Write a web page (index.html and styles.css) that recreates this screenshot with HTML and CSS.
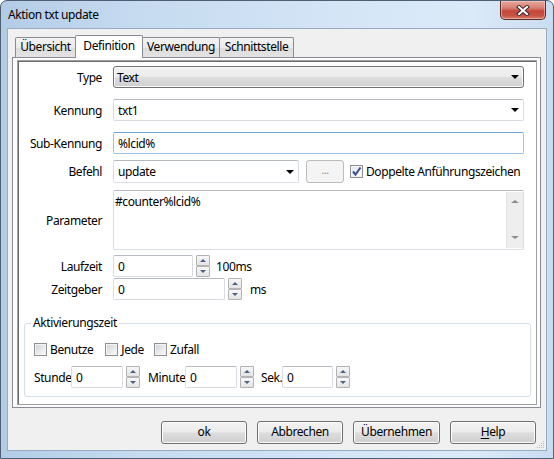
FILE: index.html
```html
<!DOCTYPE html>
<html lang="de">
<head>
<meta charset="utf-8">
<title>Aktion txt update</title>
<link rel="stylesheet" href="styles.css">
</head>
<body>
<div class="window">
  <div class="titlebar">
    <span class="title">Aktion txt update</span>
    <div class="close">
      <svg width="14" height="11" viewBox="0 0 14 11">
        <path d="M3 2 L11 9 M11 2 L3 9" stroke="#3a2a2a" stroke-width="4" stroke-linecap="square"/>
        <path d="M3 2 L11 9 M11 2 L3 9" stroke="#ffffff" stroke-width="2" stroke-linecap="square"/>
      </svg>
    </div>
  </div>
  <div class="client">
    <div class="tabs">
      <div class="tab t1">Übersicht</div>
      <div class="tab t2 active">Definition</div>
      <div class="tab t3">Verwendung</div>
      <div class="tab t4">Schnittstelle</div>
    </div>
    <div class="tabpage">
      <div class="panel">
        <div class="row r-type">
          <div class="lbl">Type</div>
          <div class="select w-full"><span>Text</span><i class="arrow"></i></div>
        </div>
        <div class="row r-kennung">
          <div class="lbl">Kennung</div>
          <div class="combo w-full"><span>txt1</span><i class="arrow"></i></div>
        </div>
        <div class="row r-sub">
          <div class="lbl">Sub-Kennung</div>
          <div class="input focused w-full"><span>%lcid%</span></div>
        </div>
        <div class="row r-befehl">
          <div class="lbl">Befehl</div>
          <div class="combo w-befehl"><span>update</span><i class="arrow"></i></div>
          <div class="dots">...</div>
          <div class="check checked">
            <svg width="11" height="11" viewBox="0 0 11 11"><path d="M2 5.5 L4.5 8.5 L9.5 1.5" fill="none" stroke="#3b4f91" stroke-width="2"/></svg>
          </div>
          <span class="check-lbl">Doppelte Anführungszeichen</span>
        </div>
        <div class="row r-param">
          <div class="lbl">Parameter</div>
          <div class="textarea w-full">
            <span class="ta-text">#counter%lcid%</span>
            <div class="vscroll"><i class="sa up"></i><i class="sa down"></i></div>
          </div>
        </div>
        <div class="row r-lauf">
          <div class="lbl">Laufzeit</div>
          <div class="input w-lauf"><span>0</span></div>
          <div class="spin"><div class="sb"><i class="up"></i></div><div class="sb"><i class="down"></i></div></div>
          <span class="unit u1">100ms</span>
        </div>
        <div class="row r-zeit">
          <div class="lbl">Zeitgeber</div>
          <div class="input w-zeit"><span>0</span></div>
          <div class="spin"><div class="sb"><i class="up"></i></div><div class="sb"><i class="down"></i></div></div>
          <span class="unit u2">ms</span>
        </div>
        <fieldset class="group">
          <legend>Aktivierungszeit</legend>
          <div class="checks">
            <div class="check c1"></div><span class="cl">Benutze</span>
            <div class="check c2"></div><span class="cl">Jede</span>
            <div class="check c3"></div><span class="cl">Zufall</span>
          </div>
          <div class="times">
            <span class="tl tl-std">Stunde</span>
            <div class="input w-t"><span>0</span></div>
            <div class="spin"><div class="sb"><i class="up"></i></div><div class="sb"><i class="down"></i></div></div>
            <span class="tl tl-min">Minute</span>
            <div class="input w-t"><span>0</span></div>
            <div class="spin"><div class="sb"><i class="up"></i></div><div class="sb"><i class="down"></i></div></div>
            <span class="tl tl-sek">Sek.</span>
            <div class="input w-t2"><span>0</span></div>
            <div class="spin sp3"><div class="sb"><i class="up"></i></div><div class="sb"><i class="down"></i></div></div>
          </div>
        </fieldset>
      </div>
    </div>
    <div class="buttons">
      <div class="btn b1">ok</div>
      <div class="btn b2">Abbrechen</div>
      <div class="btn b3">Übernehmen</div>
      <div class="btn b4"><u>H</u>elp</div>
    </div>
    <svg class="grip" width="8" height="8" viewBox="0 0 8 8">
      <rect x="6" y="0" width="1" height="1" fill="#b9b9b9"/>
      <rect x="4" y="2" width="1" height="1" fill="#b9b9b9"/><rect x="6" y="2" width="1" height="1" fill="#b9b9b9"/>
      <rect x="2" y="4" width="1" height="1" fill="#b9b9b9"/><rect x="4" y="4" width="1" height="1" fill="#b9b9b9"/><rect x="6" y="4" width="1" height="1" fill="#b9b9b9"/>
      <rect x="0" y="6" width="1" height="1" fill="#b9b9b9"/><rect x="2" y="6" width="1" height="1" fill="#b9b9b9"/><rect x="4" y="6" width="1" height="1" fill="#b9b9b9"/><rect x="6" y="6" width="1" height="1" fill="#b9b9b9"/>
    </svg>
  </div>
</div>
</body>
</html>
```
FILE: styles.css
```css
* { box-sizing: border-box; }
html, body { margin: 0; padding: 0; background: #ffffff; }
body {
  font-family: "Noto Sans", "Open Sans", sans-serif;
  font-size: 12px;
  letter-spacing: -0.4px;
  color: #000;
}
.window {
  width: 554px;
  height: 459px;
  border: 1px solid #4e5f73;
  border-radius: 7px 7px 0 0;
  background: linear-gradient(to right, #b3cce6 0%, #c6dbf0 25%, #d5e6f7 65%, #dbeaf8 85%, #c9dcf0 100%);
  display: flex;
  flex-direction: column;
  overflow: hidden;
  position: relative;
}
.titlebar {
  height: 28px;
  display: flex;
  justify-content: space-between;
  align-items: flex-start;
  padding-left: 7px;
  padding-right: 7px;
}
.title {
  margin-top: 6px;
  line-height: 16px;
  color: #000;
}
.close {
  width: 46px;
  height: 19px;
  border: 1px solid #5c2a25;
  border-top: none;
  border-radius: 0 0 5px 5px;
  background: linear-gradient(#e8a89e 0%, #d77d70 40%, #c4463a 55%, #c85243 80%, #d67c6c 100%);
  box-shadow: inset 0 0 0 1px rgba(255,210,200,0.55);
  display: flex;
  align-items: center;
  justify-content: center;
}
.client {
  position: relative;
  margin: 0 7px;
  width: 538px;
  height: 421px;
  background: #f0f0f0;
  box-shadow: 0 0 0 1px #97abc2;
  padding: 6px 0 0 4px;
}
.tabs {
  display: flex;
  align-items: flex-end;
  height: 23px;
  padding-left: 3px;
  position: relative;
  z-index: 2;
}
.tab {
  height: 20px;
  margin-bottom: 1px;
  border: 1px solid #898c95;
  border-bottom: none;
  border-radius: 2px 2px 0 0;
  background: linear-gradient(#f3f3f3, #ebebeb 50%, #dddddd 51%, #e3e3e3);
  text-align: center;
  line-height: 18px;
  color: #000;
}
.t1 { width: 61px; }
.t2 { width: 68px; margin-left: -1px; }
.t3 { width: 78px; margin-left: -1px; }
.t4 { width: 75px; margin-left: -1px; }
.tab.active {
  height: 23px;
  margin-bottom: 0;
  background: #ffffff;
  line-height: 19px;
  position: relative;
  z-index: 3;
}
.tabpage {
  margin-top: -1px;
  width: 529px;
  height: 351px;
  border: 1px solid #898c95;
  background: #fcfcfc;
  padding: 2px 0 0 4px;
}
.panel {
  width: 520px;
  height: 345px;
  border: 1px solid #a0a0a0;
  box-shadow: inset 1px 1px 0 #6d6d6d;
  background: #ffffff;
  padding: 5px 0 0 0;
}
.row {
  display: flex;
  align-items: center;
  height: 22px;
}
.lbl {
  width: 84px;
  margin-right: 11px;
  text-align: right;
  white-space: nowrap;
}
.r-kennung, .r-sub { margin-top: 11px; }
.r-befehl { margin-top: 6px; height: 23px; }
.r-param { margin-top: 7px; height: 60px; }
.r-lauf { margin-top: 5px; }
.r-zeit { margin-top: 1px; }
.w-full { width: 411px; }
.w-befehl { width: 186px; }
.w-lauf { width: 80px; }
.w-zeit { width: 112px; }
.w-t { width: 52px; }
.w-t2 { width: 51px; }

.select, .combo, .input, .textarea {
  height: 22px;
  display: flex;
  align-items: center;
  justify-content: space-between;
  padding: 0 4px 0 4px;
  border-radius: 2px;
  white-space: nowrap;
  flex: none;
}
.select {
  border: 1px solid #707070;
  border-radius: 3px;
  background: linear-gradient(#f2f2f2 0%, #ebebeb 48%, #dddddd 52%, #cfcfcf 100%);
  box-shadow: inset 0 0 0 1px #fbfbfb;
  padding-left: 3px;
}
.combo, .input {
  border: 1px solid #d9dde3;
  border-top-color: #b5b9c0;
  background: #ffffff;
}
.r-befehl .combo { height: 23px; }
.input.focused {
  border-color: #9cc3e6;
  border-top-color: #6fa3d6;
}
.arrow {
  width: 0;
  height: 0;
  border-left: 4px solid transparent;
  border-right: 4px solid transparent;
  border-top: 4px solid #000;
}
.dots {
  width: 38px;
  height: 23px;
  margin-left: 7px;
  border: 1px solid #bcbcbc;
  border-radius: 3px;
  background: #f4f4f4;
  color: #8a8a8a;
  text-align: center;
  line-height: 18px;
  font-size: 11px;
  flex: none;
}
.check {
  width: 13px;
  height: 13px;
  border: 1px solid #8e8f8f;
  background: linear-gradient(135deg, #cfd2d6 0%, #f1f1f1 75%, #ffffff 100%);
  box-shadow: inset 0 0 0 1px #f4f4f4;
  flex: none;
  display: flex;
  align-items: center;
  justify-content: center;
}
.check.checked {
  margin-left: 6px;
  background: linear-gradient(135deg, #dde6f2, #ffffff);
}
.check-lbl { margin-left: 3px; white-space: nowrap; }

.textarea {
  height: 60px;
  border: 1px solid #d9dde3;
  border-top-color: #b5b9c0;
  background: #ffffff;
  align-items: stretch;
  padding: 0 0 0 1px;
}
.ta-text { padding-top: 3px; line-height: 16px; }
.vscroll {
  width: 17px;
  margin: 1px 0;
  background: #eeeeee;
  border-left: 1px solid #e4e4e4;
  display: flex;
  flex-direction: column;
  justify-content: space-between;
  align-items: center;
  padding: 8px 0 9px 0;
}
.sa {
  width: 0; height: 0;
  border-left: 4px solid transparent;
  border-right: 4px solid transparent;
}
.sa.up { border-bottom: 3px solid #8c8c8c; }
.sa.down { border-top: 3px solid #8c8c8c; }

.spin {
  width: 14px;
  height: 22px;
  margin-left: 3px;
  display: flex;
  flex-direction: column;
  justify-content: space-between;
  flex: none;
}
.sb {
  height: 11px;
  border: 1px solid #b3b3b3;
  border-radius: 1px;
  background: linear-gradient(#f7f7f7, #e4e4e4);
  display: flex;
  align-items: center;
  justify-content: center;
}
.sb .up {
  width: 0; height: 0;
  border-left: 3px solid transparent;
  border-right: 3px solid transparent;
  border-bottom: 3px solid #4d6185;
}
.sb .down {
  width: 0; height: 0;
  border-left: 3px solid transparent;
  border-right: 3px solid transparent;
  border-top: 3px solid #4d6185;
}
.unit { white-space: nowrap; }
.u1 { margin-left: 6px; }
.u2 { margin-left: 8px; }

.group {
  margin: 15px 0 0 6px;
  width: 507px;
  border: 1px solid #d5dfe5;
  border-radius: 3px;
  padding: 0 0 8px 9px;
}
.group legend {
  margin-left: -3px;
  padding: 0 2px;
  line-height: 16px;
}
.checks {
  display: flex;
  align-items: center;
  height: 16px;
  margin-top: 10px;
}
.cl { margin-left: 3px; white-space: nowrap; }
.c2 { margin-left: 12px; }
.c3 { margin-left: 10px; }
.times {
  display: flex;
  align-items: center;
  height: 22px;
  margin-top: 9px;
}
.tl { white-space: nowrap; flex: none; }
.tl-std { width: 37px; }
.tl-min { width: 37px; margin-left: 8px; }
.tl-sek { width: 21px; margin-left: 7px; }
.sp3 { margin-left: 3px; }

.buttons {
  display: flex;
  justify-content: flex-end;
  gap: 10px;
  padding-right: 10px;
  margin-top: 13px;
}
.btn {
  height: 23px;
  border: 1px solid #707070;
  border-radius: 3px;
  background: linear-gradient(#f2f2f2 0%, #ebebeb 48%, #dddddd 52%, #cfcfcf 100%);
  box-shadow: inset 0 0 0 1px #fcfcfc;
  text-align: center;
  line-height: 20px;
}
.b1, .b2, .b4 { width: 86px; }
.b3 { width: 87px; }
.btn u { text-decoration: underline; text-underline-offset: 2px; }
.grip {
  position: absolute;
  right: 1px;
  bottom: 1px;
}
```
